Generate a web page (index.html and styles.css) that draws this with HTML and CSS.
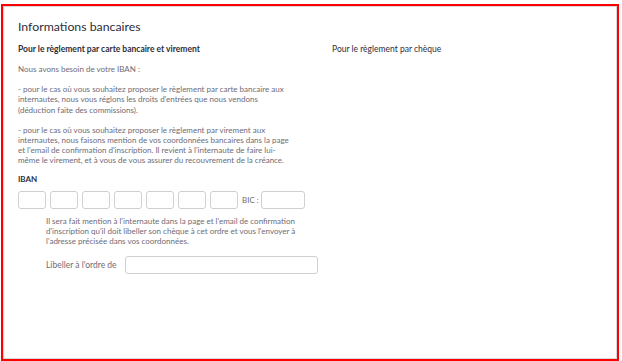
FILE: index.html
```html
<!DOCTYPE html>
<html>
<head>
    <title>Informations bancaires</title>
    <link rel="stylesheet" href="styles.css">
</head>
<body>
    <div class="frame">
        <div class="panel">
            <h2>Informations bancaires</h2>
            <div class="columns">
                <div class="col">
                    <h3>Pour le règlement par carte bancaire et virement</h3>
                    <p>Nous avons besoin de votre IBAN :</p>
                    <p>- pour le cas où vous souhaitez proposer le règlement par carte bancaire aux internautes, nous vous réglons les droits d'entrées que nous vendons (déduction faite des commissions).</p>
                    <p>- pour le cas où vous souhaitez proposer le règlement par virement aux internautes, nous faisons mention de vos coordonnées bancaires dans la page et l'email de confirmation d'inscription. Il revient à l'internaute de faire lui-même le virement, et à vous de vous assurer du recouvrement de la créance.</p>
                    <div class="label">IBAN</div>
                    <div class="iban">
                        <input class="box" type="text">
                        <input class="box" type="text">
                        <input class="box" type="text">
                        <input class="box" type="text">
                        <input class="box" type="text">
                        <input class="box" type="text">
                        <input class="box" type="text">
                        <span class="bic">BIC :</span>
                        <input class="box bic-box" type="text">
                    </div>
                    <div class="cheque">
                        <p>Il sera fait mention à l'internaute dans la page et l'email de confirmation d'inscription qu'il doit libeller son chèque à cet ordre et vous l'envoyer à l'adresse précisée dans vos coordonnées.</p>
                        <div class="order">
                            <span>Libeller à l'ordre de</span>
                            <input class="box wide" type="text">
                        </div>
                    </div>
                </div>
                <div class="col">
                    <h3 class="light">Pour le règlement par chèque</h3>
                </div>
            </div>
        </div>
    </div>
</body>
</html>
```

FILE: styles.css
```css
body {
    margin: 0;
    padding: 4px 3px 0 1px;
    font-family: Lato, "Open Sans", sans-serif;
    background: #fff;
}

.frame {
    border: 2px solid #f00;
    height: 353px;
}

.panel {
    border: 1px solid #d8d8d8;
    height: 100%;
    box-sizing: border-box;
    padding: 12px 14px;
}

h2 {
    margin: 0 0 10px;
    font-size: 12.3px;
    font-weight: normal;
    color: #2e2e3a;
}

.columns {
    display: grid;
    grid-template-columns: 314px 1fr;
}

h3 {
    margin: 0 0 10px;
    font-size: 8.5px;
    font-weight: bold;
    color: #2e2e3a;
}

h3.light {
    font-weight: normal;
}

p {
    max-width: 274px;
    margin: 0 0 10px;
    font-size: 8px;
    line-height: 10.2px;
    color: #6e6b78;
}

.label {
    font-size: 8px;
    font-weight: bold;
    color: #2e2e3a;
    margin: -2px 0 7px;
}

.iban {
    display: flex;
    align-items: center;
    gap: 4px;
}

.box {
    width: 28px;
    height: 18px;
    box-sizing: border-box;
    border: 1px solid #cfcfcf;
    border-radius: 3px;
    padding: 0;
    margin: 0;
}

.bic {
    white-space: nowrap;
    font-size: 8px;
    color: #6e6b78;
    margin-right: -2px;
}

.bic-box {
    width: 44px;
}

.cheque {
    padding-left: 28px;
    margin-top: 7px;
}

.cheque p {
    max-width: 252px;
}

.order {
    display: flex;
    align-items: center;
    gap: 8px;
    font-size: 8.5px;
    color: #6e6b78;
    white-space: nowrap;
}

.wide {
    width: 193px;
}
```
